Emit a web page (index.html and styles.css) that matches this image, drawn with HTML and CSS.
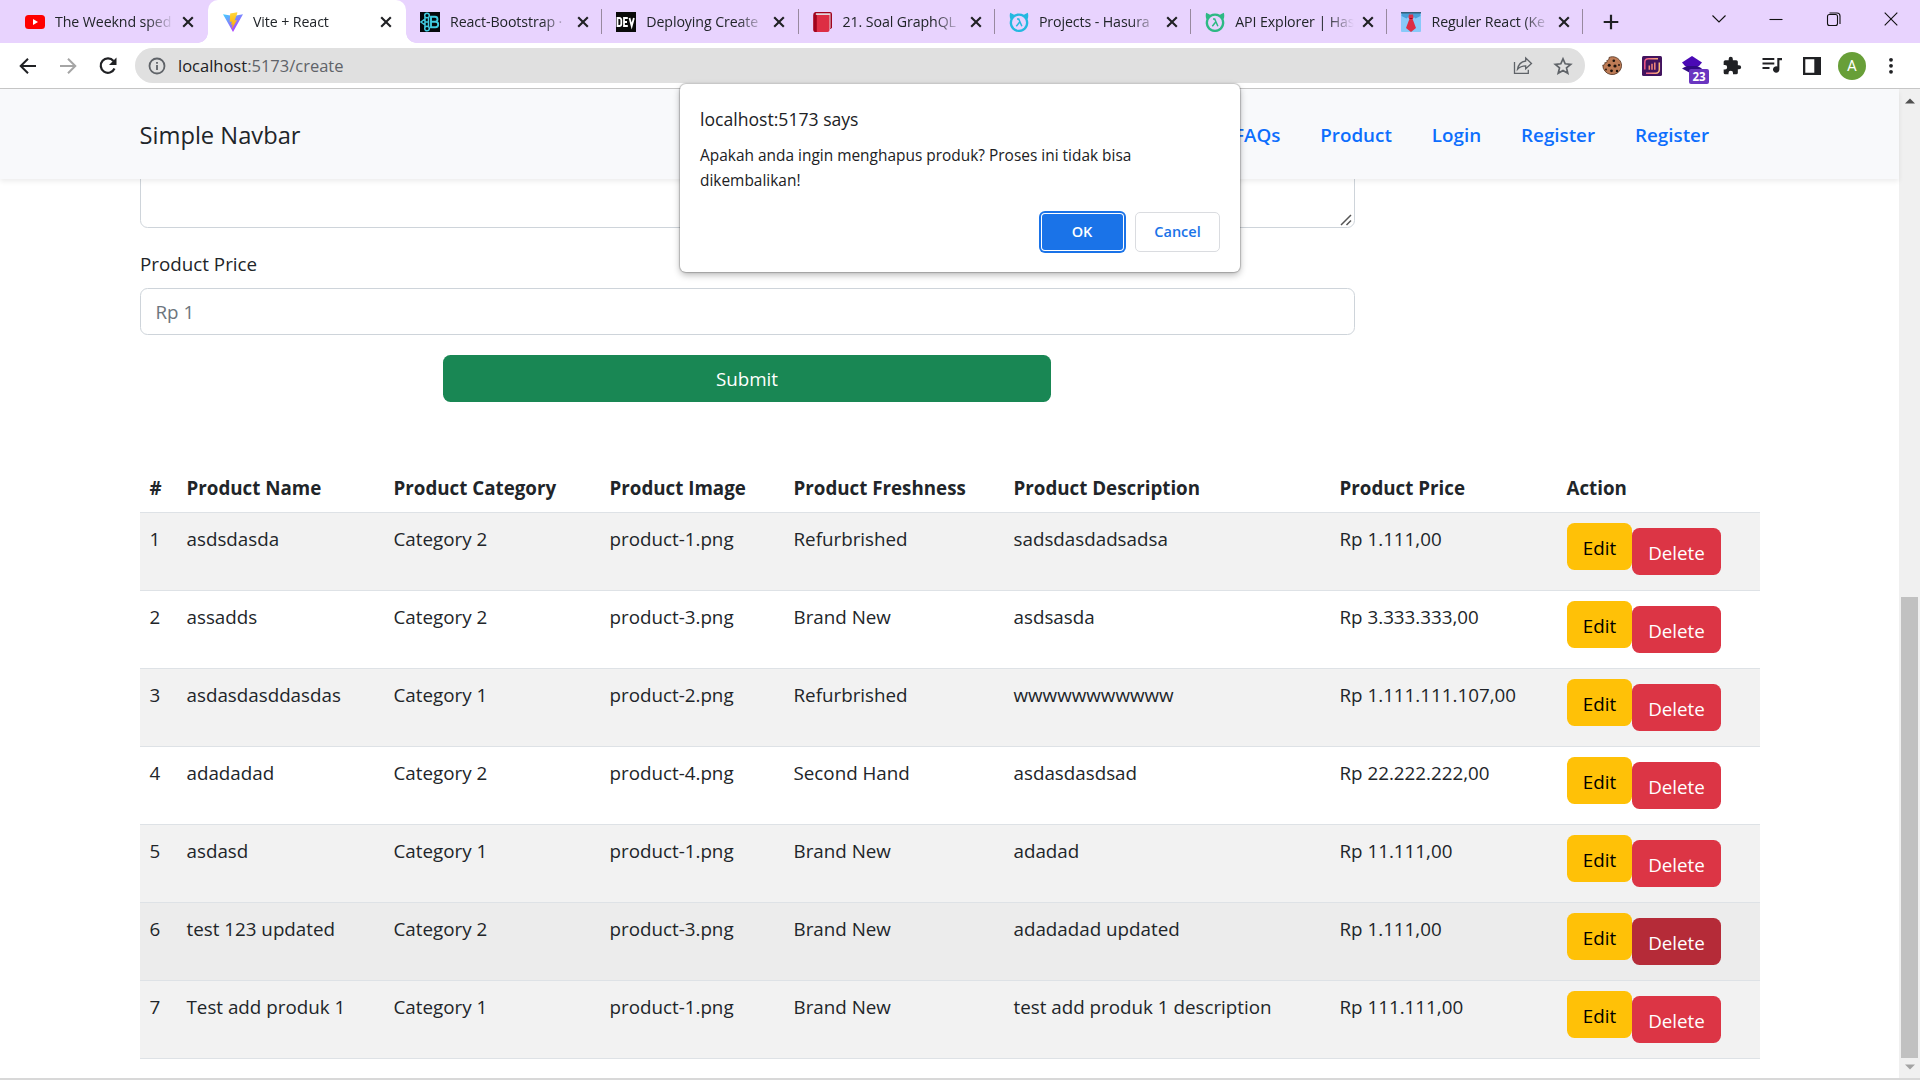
FILE: index.html
```html
<!DOCTYPE html>
<html lang="en">
<head>
<meta charset="utf-8">
<title>Vite + React</title>
<link rel="stylesheet" href="styles.css">
</head>
<body>
<svg class="defs" width="0" height="0" aria-hidden="true">
  <symbol id="x" viewBox="0 0 20 20"><path d="M5.2 5.2 14.8 14.8M14.8 5.2 5.2 14.8" stroke="#202124" stroke-width="2.1" fill="none"/></symbol>
  <symbol id="hasura" viewBox="0 0 20 20"><path d="M1.2.8C2.500 1.500 4 2.300 5 2.700 8 1 12 1 15 2.700 16 2.300 17.500 1.500 18.800.8 19.500 3 19.400 5 18.600 7.200A9.300 9.300 0 1 1 1.400 7.200C.6 5 .5 3 1.200.8Z" fill="currentColor"/><circle cx="10" cy="10.800" r="7" fill="#e8d3fe"/><path d="M8 7h1.700l3.200 7.200M10.500 10.300 7.300 14.200" stroke="currentColor" stroke-width="1.500" fill="none"/></symbol>
</svg>

<header class="browser">
  <div class="tabstrip">
    <div class="tab tab-first">
      <svg class="fav" viewBox="0 0 20 20"><rect y="3" width="20" height="14" rx="3.500" fill="#f00"/><path d="M8 7v6l5-3z" fill="#fff"/></svg>
      <span class="tab-title">The Weeknd sped</span><svg class="close"><use href="#x"/></svg>
    </div>
    <div class="tab tab-active">
      <svg class="fav" viewBox="0 0 20 20"><defs><linearGradient id="vg" x2=".7" y2="1"><stop stop-color="#41d1ff"/><stop offset="1" stop-color="#bd34fe"/></linearGradient><linearGradient id="yg" x2="0" y2="1"><stop stop-color="#ffd83a"/><stop offset="1" stop-color="#ffa800"/></linearGradient></defs><path d="M0 2.300 10 20 20 2.300 10.500 4z" fill="url(#vg)"/><path d="M14.300.2 7.200 1.600 6.700 10l2.100-.5-.6 3.200 1.500-.4-1 5 5.300-9.200-2.400.4 2.600-7z" fill="url(#yg)"/></svg>
      <span class="tab-title">Vite + React</span><svg class="close"><use href="#x"/></svg>
    </div>
    <div class="tab tab-plain">
      <svg class="fav" viewBox="0 0 20 20"><path d="M0 0h20v20H0z" fill="#05090c"/><g fill="none" stroke="#41cbe0" stroke-width="1.500"><path d="M11 4.800h4a2.500 2.500 0 0 1 0 5h-4zm0 5h4.500a2.700 2.700 0 0 1 0 5.400H11z" stroke-width="1.900"/><circle cx="7" cy="3.500" r="2.300"/><circle cx="7" cy="16.500" r="2.300"/><path d="M5 5v10M5 7 1 10l4 3M8.500 5.500v9M5 10h4"/></g></svg>
      <span class="tab-title">React-Bootstrap ·</span><svg class="close"><use href="#x"/></svg>
    </div>
    <div class="tab">
      <svg class="fav" viewBox="0 0 20 20"><path d="M0 0h20v20H0z" fill="#0a0a0a"/><path d="M1.500 6v8h1.800c1.500 0 2-.8 2-2V8c0-1.300-.6-2-2-2zM11.800 6H8v8h3.800M8 10h3M13.500 6l2.200 8 2.200-8" fill="none" stroke="#fff" stroke-width="1.800"/></svg>
      <span class="tab-title">Deploying Create</span><svg class="close"><use href="#x"/></svg>
    </div>
    <div class="tab">
      <svg class="fav" viewBox="0 0 20 20"><path d="M2.500 0H17a2 2 0 0 1 2 2v14l-2 1V3H2z" fill="#a0041e"/><path d="M3 1.200h14.500V16H16V3.500H2z" fill="#e1d8dd"/><path d="M.5 3h16v15a2 2 0 0 1-2 2h-12a2 2 0 0 1-2-2z" fill="#dd2e44"/><path d="M.3 2.500C.3 1 1.500 0 3 0v1.200c-1 .3-.5 1.800.8 1.800v17H2.300a2 2 0 0 1-2-2z" fill="#a0041e"/></svg>
      <span class="tab-title">21. Soal GraphQL</span><svg class="close"><use href="#x"/></svg>
    </div>
    <div class="tab">
      <svg class="fav cyan"><use href="#hasura"/></svg>
      <span class="tab-title">Projects - Hasura</span><svg class="close"><use href="#x"/></svg>
    </div>
    <div class="tab">
      <svg class="fav green"><use href="#hasura"/></svg>
      <span class="tab-title">API Explorer | Has</span><svg class="close"><use href="#x"/></svg>
    </div>
    <div class="tab">
      <svg class="fav" viewBox="0 0 20 20"><rect width="20" height="20" rx="1" fill="#88c9f9"/><path d="M1 0h18l.5 4-5 2.500L10 2.500 5.500 6.500.5 4z" fill="#4a9fd8"/><path d="M0 0h20v1.500H0z" fill="#35607c"/><path d="M8 2.500h4l.6 3-1 1.500L15 16l-5 4-5-4L8.400 7l-1-1.500z" fill="#dd2e44"/><path d="M8.400 7h3.200l-.3-1H8.700z" fill="#a0041e"/></svg>
      <span class="tab-title">Reguler React (Ke</span><svg class="close"><use href="#x"/></svg>
    </div>
    <svg class="newtab" viewBox="0 0 16 16"><path d="M8 .7v14.600M.7 8h14.600" stroke="#202124" stroke-width="2.200"/></svg>
    <div class="winctl">
      <svg viewBox="0 0 20 20"><path d="m3.500 6.500 6.500 6.500 6.500-6.500"/></svg>
      <svg viewBox="0 0 20 20"><path d="M3.500 10.500h13"/></svg>
      <svg viewBox="0 0 20 20"><rect x="3.500" y="5.500" width="10" height="11" rx="2"/><path d="M5.500 4h7.500a3 3 0 0 1 3 3v8"/></svg>
      <svg viewBox="0 0 20 20"><path d="m3.700 3.700 12.600 12.600m0-12.600L3.700 16.300"/></svg>
    </div>
  </div>
  <div class="toolbar">
    <svg class="navbtn" viewBox="0 0 20 20"><path d="M18 10H3M10 2.700 2.700 10l7.300 7.300" fill="none" stroke="#202124" stroke-width="2"/></svg>
    <svg class="navbtn" viewBox="0 0 20 20"><path d="M2 10h15M10 2.700l7.300 7.300-7.300 7.300" fill="none" stroke="#a5a5a5" stroke-width="2"/></svg>
    <svg class="navbtn" viewBox="0 0 20 20"><path d="M16.500 12.500A7.200 7.200 0 1 1 15.500 5" fill="none" stroke="#202124" stroke-width="2.200"/><path d="M18.500 1.500v7.500H11z" fill="#202124"/></svg>
    <div class="omnibox">
      <svg class="info" viewBox="0 0 18 18" fill="none" stroke="#5f6368" stroke-width="1.800"><circle cx="9" cy="9" r="7.500"/><path d="M9 8v5M9 5v1.800"/></svg>
      <span class="url"><b>localhost</b>:5173/create</span>
      <svg class="share" viewBox="0 0 20 20" fill="none" stroke="#5f6368" stroke-width="1.300"><path d="M1.500 6v11.300h13.800v-3.500"/><path d="M12.700 2 18.500 7.500l-5.800 5.300V9.800c-3.700 0-6 1-8.200 3.500.7-4.500 3.500-7.600 8.200-8.300z"/></svg>
      <svg class="star" viewBox="0 0 20 20"><path d="m10 2.800 2.200 5 5.500.5-4.200 3.600 1.300 5.400-4.800-2.900-4.800 2.900 1.300-5.400-4.200-3.600 5.500-.5z" fill="none" stroke="#5f6368" stroke-width="1.700"/></svg>
    </div>
    <div class="exts">
      <svg viewBox="0 0 20 20"><path d="M7 1.500c2-1 5-1.200 7.500.2 4 2 6 6.500 4.600 10.500A9.400 9.400 0 0 1 .8 9c1.600.2 2.400-.6 2-2.300C5 7 5.300 6 4.800 4.500 6.500 4.500 7.200 3.500 7 1.500z" fill="#bd7b55" stroke="#4b2c1b" stroke-width=".8"/><g fill="#1c120c"><circle cx="11.800" cy="4.800" r="1.300"/><circle cx="7.200" cy="9.300" r="1.500"/><circle cx="13" cy="10" r="1.600"/><circle cx="17" cy="9" r=".9"/><circle cx="9.500" cy="14.800" r="1.400"/><circle cx="15" cy="15" r="1.200"/><circle cx="4" cy="13.500" r=".9"/></g></svg>
      <svg viewBox="0 0 20 20"><defs><linearGradient id="eg" gradientUnits="userSpaceOnUse" x1="2" y1="10" x2="18" y2="10"><stop stop-color="#ef4f87"/><stop offset="1" stop-color="#fcc07a"/></linearGradient></defs><rect width="20" height="20" rx="1.500" fill="#42145f"/><path d="M2.800 13.500V6.200A3.500 3.500 0 0 1 6.300 2.800H16M17.300 6.500v7.300a3.500 3.500 0 0 1-3.500 3.500H4" fill="none" stroke="url(#eg)" stroke-width="1.500"/><path d="M7.300 9.500v4.200M10 7.800v5.900M12.800 6.500v7.200" stroke="#f58a7a" stroke-width="1.500"/></svg>
      <div class="badged"><svg viewBox="0 0 20 20"><path d="m10 7 10 5.500-10 5.500L0 12.500z" fill="#300a82"/><path d="m10 0 10 6.500-3 3.500H3L0 6.500z" fill="#4a09b5"/></svg><span class="badge">23</span></div>
      <svg viewBox="0 0 24 24"><path d="M20.500 11H19V7a2 2 0 0 0-2-2h-4V3.500a2.500 2.500 0 0 0-5 0V5H4a2 2 0 0 0-2 2v3.800h1.500a2.700 2.700 0 0 1 0 5.400H2V20a2 2 0 0 0 2 2h3.800v-1.500a2.700 2.700 0 0 1 5.400 0V22H17a2 2 0 0 0 2-2v-4h1.500a2.500 2.500 0 0 0 0-5z" fill="#202124"/></svg>
      <svg viewBox="0 0 20 20"><path d="M.5 3h11.800M.5 7.500h11.800M.5 12h7" stroke="#202124" stroke-width="2"/><path d="M15.300 2H20v2.200h-2.600v9.300a3.200 3.200 0 1 1-2.100-3z" fill="#202124"/></svg>
      <svg viewBox="0 0 20 20"><path d="M1.500 1.500h17v17h-17z" fill="#fff"/><path d="M1 1h18v18H1zM3.300 3.300v13.400h9V3.300z" fill="#202124" fill-rule="evenodd"/></svg>
      <span class="avatar">A</span>
      <svg viewBox="0 0 20 20" fill="#202124"><circle cx="9" cy="3.800" r="1.900"/><circle cx="9" cy="9.800" r="1.900"/><circle cx="9" cy="15.800" r="1.900"/></svg>
    </div>
  </div>
</header>

<div class="viewport">
  <main class="page">
    <nav class="navbar">
      <span class="brand">Simple Navbar</span>
      <div class="links"><a>FAQs</a><a>Product</a><a>Login</a><a>Register</a><a>Register</a></div>
    </nav>
    <form class="form">
      <div class="textarea"><svg viewBox="0 0 12 12"><path d="M1 11 11 1M6.500 11 11 6.500" stroke="#555" stroke-width="1.500"/></svg></div>
      <label class="label">Product Price</label>
      <div class="input">Rp 1</div>
      <div class="submit">Submit</div>
    </form>
    <table class="table">
      <colgroup><col class="c1"><col class="c2"><col class="c3"><col class="c4"><col class="c5"><col class="c6"><col class="c7"><col class="c8"></colgroup>
      <thead><tr><th>#</th><th>Product Name</th><th>Product Category</th><th>Product Image</th><th>Product Freshness</th><th>Product Description</th><th>Product Price</th><th>Action</th></tr></thead>
      <tbody>
        <tr><td>1</td><td>asdsdasda</td><td>Category 2</td><td>product-1.png</td><td>Refurbrished</td><td>sadsdasdadsadsa</td><td>Rp 1.111,00</td><td><div class="actions"><span class="btn edit">Edit</span><span class="btn delete">Delete</span></div></td></tr>
        <tr><td>2</td><td>assadds</td><td>Category 2</td><td>product-3.png</td><td>Brand New</td><td>asdsasda</td><td>Rp 3.333.333,00</td><td><div class="actions"><span class="btn edit">Edit</span><span class="btn delete">Delete</span></div></td></tr>
        <tr><td>3</td><td>asdasdasddasdas</td><td>Category 1</td><td>product-2.png</td><td>Refurbrished</td><td>wwwwwwwwwww</td><td>Rp 1.111.111.107,00</td><td><div class="actions"><span class="btn edit">Edit</span><span class="btn delete">Delete</span></div></td></tr>
        <tr><td>4</td><td>adadadad</td><td>Category 2</td><td>product-4.png</td><td>Second Hand</td><td>asdasdasdsad</td><td>Rp 22.222.222,00</td><td><div class="actions"><span class="btn edit">Edit</span><span class="btn delete">Delete</span></div></td></tr>
        <tr><td>5</td><td>asdasd</td><td>Category 1</td><td>product-1.png</td><td>Brand New</td><td>adadad</td><td>Rp 11.111,00</td><td><div class="actions"><span class="btn edit">Edit</span><span class="btn delete">Delete</span></div></td></tr>
        <tr class="hovered"><td>6</td><td>test 123 updated</td><td>Category 2</td><td>product-3.png</td><td>Brand New</td><td>adadadad updated</td><td>Rp 1.111,00</td><td><div class="actions"><span class="btn edit">Edit</span><span class="btn delete">Delete</span></div></td></tr>
        <tr><td>7</td><td>Test add produk 1</td><td>Category 1</td><td>product-1.png</td><td>Brand New</td><td>test add produk 1 description</td><td>Rp 111.111,00</td><td><div class="actions"><span class="btn edit">Edit</span><span class="btn delete">Delete</span></div></td></tr>
      </tbody>
    </table>
  </main>
  <div class="scrollbar">
    <svg viewBox="0 0 10 6"><path d="M0 5.500 5 .5l5 5z" fill="#505050"/></svg>
    <div class="thumb"></div>
    <svg viewBox="0 0 10 6"><path d="M0 .5h10L5 5.500z" fill="#a3a3a3"/></svg>
  </div>
</div>

<div class="dialog">
  <div class="dialog-title">localhost:5173 says</div>
  <div class="dialog-text">Apakah anda ingin menghapus produk? Proses ini tidak bisa<br>dikembalikan!</div>
  <div class="dialog-buttons"><span class="ok">OK</span><span class="cancel">Cancel</span></div>
</div>
</body>
</html>
```
FILE: styles.css
```css
* { box-sizing: border-box; }
body {
  margin: 0;
  width: 1920px;
  height: 1080px;
  overflow: hidden;
  display: flex;
  flex-direction: column;
  background: #fff;
  color: #212529;
  font-family: "Open Sans", "Noto Sans", sans-serif;
  font-size: 18.800px;
}
svg { display: block; flex: none; }
.defs { position: absolute; }

.browser { flex: none; height: 89px; border-bottom: 1px solid #c6c6c6; }
.tabstrip { height: 43px; background: #e8d3fe; display: flex; align-items: center; padding-left: 10px; }
.tab { width: 196.300px; height: 43px; padding-left: 15px; display: flex; align-items: center; position: relative; }
.tab-first { width: 198px; }
.tab-active { width: 198px; margin-right: -1px; background: #fff; border-radius: 10px 10px 0 0; }
.tab-active::before, .tab-active::after { content: ""; position: absolute; bottom: 0; width: 10px; height: 10px; }
.tab-active::before { left: -10px; background: radial-gradient(circle at 0 0, transparent 9.500px, #fff 10px); }
.tab-active::after { right: -10px; background: radial-gradient(circle at 100% 0, transparent 9.500px, #fff 10px); }
.tab-plain ~ .tab::before { content: ""; position: absolute; left: 0; top: 9px; width: 1px; height: 25px; background: #98899f; }
.tab:nth-child(8)::after { content: ""; position: absolute; right: 0; top: 9px; width: 1px; height: 25px; background: #98899f; }
.fav { width: 20px; height: 20px; }
.cyan { color: #24b8e0; }
.green { color: #2db984; }
.tab-title {
  width: 124px;
  margin-left: 10px;
  white-space: nowrap;
  font-size: 14.200px;
  letter-spacing: -.1px;
  line-height: 22px;
  -webkit-mask-image: linear-gradient(90deg, #000 92px, transparent 119px);
  mask-image: linear-gradient(90deg, #000 92px, transparent 119px);
}
.close { width: 20px; height: 20px; margin-left: -1px; }
.newtab { width: 16px; height: 16px; margin-left: 20px; }
.winctl { margin-left: auto; display: flex; gap: 37.300px; padding: 0 19px 6px 0; }
.winctl svg { width: 20px; height: 20px; fill: none; stroke: #111; stroke-width: 1.100; }

.toolbar { height: 45px; display: flex; align-items: center; padding-left: 17.500px; }
.navbtn { width: 20px; height: 20px; margin-right: 20px; }
.navbtn + .navbtn + .navbtn { margin-right: 17px; }
.omnibox { width: 1450px; height: 35px; border-radius: 18px; background: #e0e0e0; display: flex; align-items: center; padding: 0 12px 0 13.500px; }
.info { width: 18px; height: 18px; }
.url { margin-left: 12px; font-size: 16.500px; line-height: 22px; color: #5f6368; flex: 1; }
.url b { font-weight: 400; color: #202124; }
.share, .star { width: 20px; height: 20px; }
.star { margin-left: 20px; }
.exts { display: flex; align-items: center; gap: 20px; margin-left: 17.500px; }
.exts svg { width: 20px; height: 20px; }
.badged { position: relative; }
.badge { position: absolute; left: 7px; top: 13px; width: 20px; height: 15px; border-radius: 2px; background: #6a35c0; color: #fff; font-size: 11.500px; font-weight: 700; line-height: 15px; text-align: center; }
.avatar { width: 28px; height: 28px; margin: 0 -4px; border-radius: 50%; background: #689f38; color: #fff; font: 400 15px/28px Roboto, sans-serif; text-align: center; }

.viewport { flex: 1; display: flex; min-height: 0; border-bottom: 2px solid #d8d8d8; }
.page { flex: 1; }
.navbar { position: relative; height: 90px; padding: 2px 190px 0 139.500px; display: flex; align-items: center; justify-content: space-between; background: #f8f9fb; box-shadow: 0 2.500px 5px rgba(0, 0, 0, .075); z-index: 1; }
.brand { font-size: 23.700px; line-height: 32px; }
.links { display: flex; gap: 40px; color: #0d6efd; font-weight: 600; font-size: 18.800px; line-height: 26px; }
.form { width: 1215px; margin-left: 140px; }
.textarea { height: 59px; margin-top: -10px; border: 1px solid #ced4da; border-radius: 7.500px; display: flex; align-items: flex-end; justify-content: flex-end; padding: 0 2px 1px 0; }
.textarea svg { width: 12px; height: 12px; }
.label { display: block; line-height: 30px; margin: 21px 0 9px; }
.input { height: 47px; border: 1px solid #ced4da; border-radius: 7.500px; padding-left: 14.500px; line-height: 47px; color: #6c757d; }
.submit { width: 608px; height: 47px; margin: 20px 0 0 303px; border-radius: 7.500px; background: #198754; color: #fff; line-height: 49px; text-align: center; }

.table { width: 1620px; margin: 62px 0 0 140px; table-layout: fixed; border-collapse: separate; border-spacing: 0; }
.c1 { width: 37px; } .c2 { width: 207px; } .c3 { width: 216px; } .c4 { width: 184px; }
.c5 { width: 220px; } .c6 { width: 326px; } .c7 { width: 227px; } .c8 { width: 203px; }
.table th, .table td { padding: 10px 0 0 9.500px; text-align: left; vertical-align: top; border-bottom: 1px solid #dee2e6; white-space: nowrap; line-height: 32px; }
.table th { height: 49px; line-height: 28px; font-weight: 700; font-size: 18.750px; }
.table td { height: 78px; }
.table td:last-child { padding-left: 10px; }
tbody tr:nth-child(odd) td { background: #f2f2f2; }
tbody tr.hovered td { background: #ececec; }
.actions { display: flex; }
.btn { height: 47px; border-radius: 7.500px; line-height: 50px; text-align: center; }
.edit { width: 65px; background: #ffc107; color: #000; }
.delete { width: 89px; margin-top: 5px; background: #dc3545; color: #fff; }
.hovered .delete { background: #b52b38; }

.scrollbar { width: 21px; background: #f0f0f0; display: flex; flex-direction: column; align-items: center; padding: 9px 0 8px; }
.scrollbar svg { width: 10px; height: 6px; }
.thumb { width: 17px; height: 461px; margin: auto 0 6px; background: #c1c1c1; }

.dialog { position: absolute; z-index: 5; left: 680px; top: 84px; width: 560px; height: 188px; padding: 20px 20px 0; background: #fff; border-radius: 6px; box-shadow: 0 0 1px 1px rgba(0, 0, 0, .2), 0 3px 7px rgba(0, 0, 0, .28); color: #202124; }
.dialog-title { font-size: 17.600px; line-height: 30px; }
.dialog-text { margin-top: 9px; font-size: 15.450px; line-height: 25px; white-space: nowrap; }
.dialog-buttons { display: flex; justify-content: flex-end; gap: 12.500px; margin-top: 19px; font-size: 14.500px; font-weight: 600; line-height: 38px; text-align: center; }
.ok { width: 81px; height: 36px; margin: 2px 0; line-height: 36px; background: #1a73e8; color: #fff; border-radius: 3px; box-shadow: 0 0 0 1px #fff, 0 0 0 3px #1a73e8; }
.cancel { width: 85px; height: 40px; border: 1px solid #dadce0; border-radius: 5px; color: #1a73e8; }
```
